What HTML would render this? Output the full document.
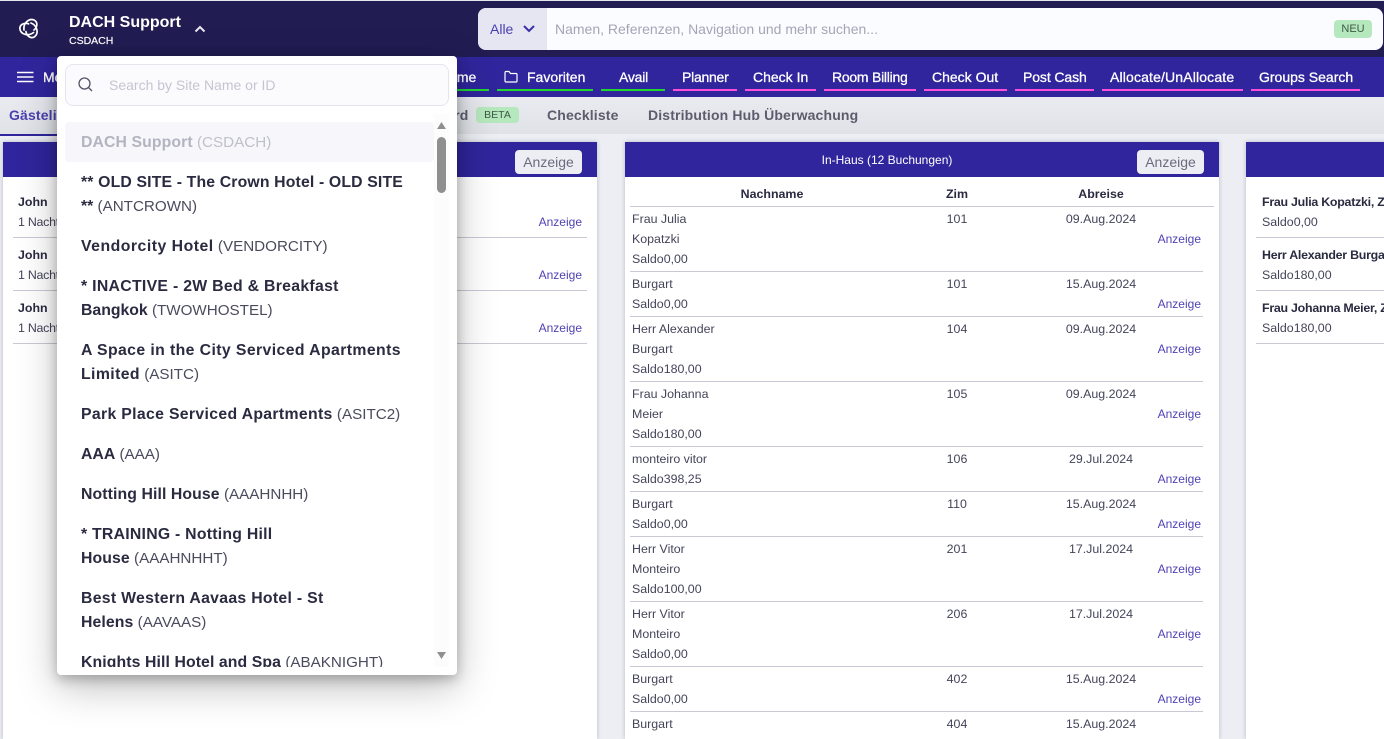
<!DOCTYPE html>
<html lang="de"><head><meta charset="utf-8"><title>DACH Support</title>
<style>
*{box-sizing:border-box}
html,body{margin:0;padding:0;width:1384px;height:739px;overflow:hidden}
body{background:#eceef4;font-family:"Liberation Sans",sans-serif;color:#33334a}
#w{position:relative;width:1384px;height:739px;overflow:hidden;background:#eceef4}
.a{position:absolute}
.t{position:absolute;white-space:nowrap;line-height:20px;height:20px;font-size:12.4px;color:#44445a;margin-top:1px}
.z{margin-top:0}
.c{transform:translateX(-50%)}
.r{transform:translateX(-100%)}
.b{font-weight:bold;color:#2a2a40}
.l{color:#4f42b5;font-size:12px}
.ln{position:absolute;height:1px;background:#c9c9d6}
.n{position:absolute;top:67px;height:20px;line-height:20px;font-size:14px;color:#fff;white-space:nowrap;-webkit-text-stroke:.3px #fff}
.u{position:absolute;top:89px;height:2px}
.g{background:#1fd62e}.p{background:#ff4fd8}
.panel{position:absolute;top:142px;height:597px;background:#fff;box-shadow:0 0 4px rgba(60,60,90,.3)}
.ph{position:absolute;left:0;right:0;top:0;height:35px;background:#30259c}
.btn{position:absolute;top:150px;width:67px;height:24px;border-radius:4px;background:#eceef4;color:#6b6b7d;font-size:14px;line-height:24px;text-align:center}
.i{position:absolute;left:24px;white-space:nowrap;line-height:24px;height:24px;font-size:15.2px;color:#2a2a40}
.i b{font-size:15.8px}
.i span{color:#4b4b5e}
.tab{position:absolute;top:105px;line-height:20px;font-size:14px;font-weight:bold;letter-spacing:.15px;color:#5c5c6c;white-space:nowrap}
.x{letter-spacing:-.25px}
</style></head><body><div id="w">

<div class="a" style="left:0;top:0;width:1384px;height:57px;background:#211d53"></div>
<div class="a" style="left:0;top:0;width:1384px;height:1px;background:#e6e6ee"></div>
<svg class="a" style="left:19px;top:18px" width="21" height="21" viewBox="0 0 21 21" fill="none" stroke="#fff" stroke-width="1.700" stroke-linecap="round">
<g id="k"><path d="M5 12C4 5 10 0 15 2C19 4 18.500 9 15 12"/></g>
<path transform="rotate(120 10.500 10.500)" d="M5 12C4 5 10 0 15 2C19 4 18.500 9 15 12"/>
<path transform="rotate(240 10.500 10.500)" d="M5 12C4 5 10 0 15 2C19 4 18.500 9 15 12"/>
</svg>
<div class="t" style="left:69px;top:12px;font-size:16px;font-weight:bold;color:#fff">DACH Support</div>
<div class="t z" style="left:69px;top:31px;font-size:10.5px;color:#fff;-webkit-text-stroke:.2px #fff">CSDACH</div>
<svg class="a" style="left:194px;top:24px" width="12" height="10" viewBox="0 0 12 10" fill="none" stroke="#e8e8f0" stroke-width="2"><path d="M1.500 7.500L6 3l4.500 4.500"/></svg>

<div class="a" style="left:478px;top:8px;width:905px;height:42px;background:#fbfcff;border-radius:8px"></div>
<div class="a" style="left:478px;top:8px;width:69px;height:42px;background:#e6e6f3;border-radius:8px 0 0 8px"></div>
<div class="t z" style="left:490px;top:19px;font-size:14px;color:#4a3fb0">Alle</div>
<svg class="a" style="left:522px;top:24px" width="14" height="10" viewBox="0 0 14 10" fill="none" stroke="#3a2fa5" stroke-width="2"><path d="M2 2l5 5 5-5"/></svg>
<div class="t z" style="left:555px;top:19px;font-size:14px;color:#a5a5b5">Namen, Referenzen, Navigation und mehr suchen...</div>
<div class="a" style="left:1334px;top:20px;width:38px;height:18px;background:#b6e8bd;border-radius:4px;color:#3d5a45;font-size:11px;line-height:18px;text-align:center">NEU</div>

<div class="a" style="left:0;top:57px;width:1384px;height:40px;background:#30259c"></div>
<svg class="a" style="left:17px;top:71px" width="17" height="12" viewBox="0 0 17 12" stroke="#fff" stroke-width="1.600"><path d="M0 1.500h16.500M0 6h16.500M0 10.500h16.500"/></svg>
<div class="n" style="left:43px">Menü</div>
<div class="n" style="left:439px">Home</div>
<div class="u g" style="left:440px;width:49px"></div>
<svg class="a" style="left:504px;top:70px" width="14" height="13" viewBox="0 0 14 13" fill="none" stroke="#fff" stroke-width="1.200"><path d="M1 2.500a1 1 0 0 1 1-1h3l1.500 2H12a1 1 0 0 1 1 1V11a1 1 0 0 1-1 1H2a1 1 0 0 1-1-1z"/></svg>
<div class="n" style="left:527px">Favoriten</div>
<div class="u g" style="left:497px;width:96px"></div>
<div class="n" style="left:619px;letter-spacing:-.2px">Avail</div>
<div class="u g" style="left:601px;width:64px"></div>
<div class="n" style="left:682px;letter-spacing:-.25px">Planner</div>
<div class="u p" style="left:673px;width:64px"></div>
<div class="n" style="left:753px">Check In</div>
<div class="u p" style="left:745px;width:71px"></div>
<div class="n" style="left:832px;letter-spacing:-.25px">Room Billing</div>
<div class="u p" style="left:824px;width:92px"></div>
<div class="n" style="left:932px">Check Out</div>
<div class="u p" style="left:924px;width:83px"></div>
<div class="n" style="left:1023px;letter-spacing:-.1px">Post Cash</div>
<div class="u p" style="left:1015px;width:79px"></div>
<div class="n" style="left:1110px;letter-spacing:.15px">Allocate/UnAllocate</div>
<div class="u p" style="left:1102px;width:141px"></div>
<div class="n" style="left:1259px">Groups Search</div>
<div class="u p" style="left:1251px;width:109px"></div>

<div class="a" style="left:0;top:97px;width:1384px;height:37px;background:linear-gradient(#e9ebf1,#dfe2e6)"></div>
<div class="a" style="left:0;top:134px;width:100px;height:2px;background:#30259c"></div>
<div class="tab" style="left:9px;color:#4a3fb0">Gästeliste</div>
<div class="tab" style="left:394px">Dashboard</div>
<div class="a" style="left:476px;top:107px;width:43px;height:16px;background:#b6e8bd;border-radius:4px;color:#3d5a45;font-size:10.5px;line-height:16px;text-align:center">BETA</div>
<div class="tab" style="left:547px">Checkliste</div>
<div class="tab" style="left:648px">Distribution Hub Überwachung</div>

<div class="panel" style="left:3px;width:594px"><div class="ph"></div></div>
<div class="btn" style="left:515px">Anzeige</div>
<div class="t b" style="left:18px;top:191px">John</div><div class="t x" style="left:18px;top:211px">1 Nacht</div><div class="t l r" style="left:582px;top:211px">Anzeige</div><div class="ln" style="left:13px;top:237px;width:574px"></div>
<div class="t b" style="left:18px;top:244px">John</div><div class="t x" style="left:18px;top:264px">1 Nacht</div><div class="t l r" style="left:582px;top:264px">Anzeige</div><div class="ln" style="left:13px;top:290px;width:574px"></div>
<div class="t b" style="left:18px;top:297px">John</div><div class="t x" style="left:18px;top:317px">1 Nacht</div><div class="t l r" style="left:582px;top:317px">Anzeige</div><div class="ln" style="left:13px;top:343px;width:574px"></div>

<div class="panel" style="left:625px;width:594px"><div class="ph"></div></div>
<div class="t c z" style="left:887px;top:150px;color:#fff;font-size:12px">In-Haus (12 Buchungen)</div>
<div class="btn" style="left:1137px">Anzeige</div>
<div class="t b c" style="left:772px;top:183px">Nachname</div><div class="t b c" style="left:957px;top:183px">Zim</div><div class="t b c" style="left:1101px;top:183px">Abreise</div>
<div class="ln" style="left:630px;top:206px;width:584px"></div>

<div class="t" style="left:632px;top:208px">Frau Julia</div><div class="t" style="left:632px;top:228px">Kopatzki</div><div class="t" style="left:632px;top:248px">Saldo0,00</div><div class="t c" style="left:957px;top:208px">101</div><div class="t c" style="left:1101px;top:208px">09.Aug.2024</div><div class="t l r" style="left:1201px;top:228px">Anzeige</div><div class="ln" style="left:630px;top:271px;width:573px"></div>
<div class="t" style="left:632px;top:273px">Burgart</div><div class="t" style="left:632px;top:293px">Saldo0,00</div><div class="t c" style="left:957px;top:273px">101</div><div class="t c" style="left:1101px;top:273px">15.Aug.2024</div><div class="t l r" style="left:1201px;top:293px">Anzeige</div><div class="ln" style="left:630px;top:316px;width:573px"></div>
<div class="t" style="left:632px;top:318px">Herr Alexander</div><div class="t" style="left:632px;top:338px">Burgart</div><div class="t" style="left:632px;top:358px">Saldo180,00</div><div class="t c" style="left:957px;top:318px">104</div><div class="t c" style="left:1101px;top:318px">09.Aug.2024</div><div class="t l r" style="left:1201px;top:338px">Anzeige</div><div class="ln" style="left:630px;top:381px;width:573px"></div>
<div class="t" style="left:632px;top:383px">Frau Johanna</div><div class="t" style="left:632px;top:403px">Meier</div><div class="t" style="left:632px;top:423px">Saldo180,00</div><div class="t c" style="left:957px;top:383px">105</div><div class="t c" style="left:1101px;top:383px">09.Aug.2024</div><div class="t l r" style="left:1201px;top:403px">Anzeige</div><div class="ln" style="left:630px;top:446px;width:573px"></div>
<div class="t" style="left:632px;top:448px">monteiro vitor</div><div class="t" style="left:632px;top:468px">Saldo398,25</div><div class="t c" style="left:957px;top:448px">106</div><div class="t c" style="left:1101px;top:448px">29.Jul.2024</div><div class="t l r" style="left:1201px;top:468px">Anzeige</div><div class="ln" style="left:630px;top:491px;width:573px"></div>
<div class="t" style="left:632px;top:493px">Burgart</div><div class="t" style="left:632px;top:513px">Saldo0,00</div><div class="t c" style="left:957px;top:493px">110</div><div class="t c" style="left:1101px;top:493px">15.Aug.2024</div><div class="t l r" style="left:1201px;top:513px">Anzeige</div><div class="ln" style="left:630px;top:536px;width:573px"></div>
<div class="t" style="left:632px;top:538px">Herr Vitor</div><div class="t" style="left:632px;top:558px">Monteiro</div><div class="t" style="left:632px;top:578px">Saldo100,00</div><div class="t c" style="left:957px;top:538px">201</div><div class="t c" style="left:1101px;top:538px">17.Jul.2024</div><div class="t l r" style="left:1201px;top:558px">Anzeige</div><div class="ln" style="left:630px;top:601px;width:573px"></div>
<div class="t" style="left:632px;top:603px">Herr Vitor</div><div class="t" style="left:632px;top:623px">Monteiro</div><div class="t" style="left:632px;top:643px">Saldo0,00</div><div class="t c" style="left:957px;top:603px">206</div><div class="t c" style="left:1101px;top:603px">17.Jul.2024</div><div class="t l r" style="left:1201px;top:623px">Anzeige</div><div class="ln" style="left:630px;top:666px;width:573px"></div>
<div class="t" style="left:632px;top:668px">Burgart</div><div class="t" style="left:632px;top:688px">Saldo0,00</div><div class="t c" style="left:957px;top:668px">402</div><div class="t c" style="left:1101px;top:668px">15.Aug.2024</div><div class="t l r" style="left:1201px;top:688px">Anzeige</div><div class="ln" style="left:630px;top:711px;width:573px"></div>
<div class="t" style="left:632px;top:713px">Burgart</div><div class="t c" style="left:957px;top:713px">404</div><div class="t c" style="left:1101px;top:713px">15.Aug.2024</div>
<div class="a" style="left:625px;top:730px;width:594px;height:9px;overflow:hidden"><div class="t" style="left:7px;top:3px">Saldo0,00</div><div class="t l r" style="left:576px;top:3px">Anzeige</div></div>

<div class="a" style="left:1240px;top:136px;width:144px;height:603px;overflow:hidden">
<div class="panel" style="left:6px;top:6px;width:160px"><div class="ph"></div></div>
<div class="t b x" style="left:22px;top:55px">Frau Julia Kopatzki, Zimmer 101</div><div class="t" style="left:22px;top:75px">Saldo0,00</div><div class="ln" style="left:16px;top:101px;width:128px"></div>
<div class="t b x" style="left:22px;top:108px">Herr Alexander Burgart, Zimmer 104</div><div class="t" style="left:22px;top:128px">Saldo180,00</div><div class="ln" style="left:16px;top:154px;width:128px"></div>
<div class="t b x" style="left:22px;top:161px">Frau Johanna Meier, Zimmer 105</div><div class="t" style="left:22px;top:181px">Saldo180,00</div><div class="ln" style="left:16px;top:207px;width:128px"></div>
</div>

<div class="a" style="left:57px;top:56px;width:400px;height:619px;background:#fff;border-radius:4px;box-shadow:0 4px 12px rgba(0,0,0,.25),0 12px 40px rgba(0,0,0,.25);overflow:hidden">
<div class="a" style="left:8px;top:8px;width:384px;height:42px;background:#fbfbfd;border:1px solid #e5e5ee;border-radius:8px"></div>
<svg class="a" style="left:20px;top:20px" width="17" height="17" viewBox="0 0 17 17" fill="none" stroke="#55556a" stroke-width="1.300"><circle cx="7.500" cy="7.500" r="5.500"/><path d="M11.500 11.500L15 15"/></svg>
<div class="t z" style="left:52px;top:19px;font-size:14px;color:#c5c5d2">Search by Site Name or ID</div>
<div class="a" style="left:8px;top:66px;width:369px;height:40px;background:#f6f6fb;border-radius:4px"></div>
<div class="a" style="left:0;top:0;width:400px;height:611px;overflow:hidden">
<div class="i" style="top:75px;color:#b4b4c0"><b style="letter-spacing:.1px">DACH Support</b> <span style="color:#c0c0cb">(CSDACH)</span></div>
<div class="i" style="top:115px"><b style="letter-spacing:.15px">** OLD SITE - The Crown Hotel - OLD SITE</b></div>
<div class="i" style="top:139px"><b>**</b> <span>(ANTCROWN)</span></div>
<div class="i" style="top:179px"><b style="letter-spacing:.5px">Vendorcity Hotel</b> <span>(VENDORCITY)</span></div>
<div class="i" style="top:219px"><b style="letter-spacing:.3px">* INACTIVE - 2W Bed &amp; Breakfast</b></div>
<div class="i" style="top:243px"><b>Bangkok</b> <span>(TWOWHOSTEL)</span></div>
<div class="i" style="top:283px"><b style="letter-spacing:.4px">A Space in the City Serviced Apartments</b></div>
<div class="i" style="top:307px"><b style="letter-spacing:.4px">Limited</b> <span>(ASITC)</span></div>
<div class="i" style="top:347px"><b style="letter-spacing:.33px">Park Place Serviced Apartments</b> <span>(ASITC2)</span></div>
<div class="i" style="top:387px"><b>AAA</b> <span>(AAA)</span></div>
<div class="i" style="top:427px"><b style="letter-spacing:.1px">Notting Hill House</b> <span>(AAAHNHH)</span></div>
<div class="i" style="top:467px"><b style="letter-spacing:.25px">* TRAINING - Notting Hill</b></div>
<div class="i" style="top:491px"><b style="letter-spacing:.1px">House</b> <span>(AAAHNHHT)</span></div>
<div class="i" style="top:531px"><b style="letter-spacing:.3px">Best Western Aavaas Hotel - St</b></div>
<div class="i" style="top:555px"><b style="letter-spacing:.1px">Helens</b> <span>(AAVAAS)</span></div>
<div class="i" style="top:595px"><b style="letter-spacing:.1px">Knights Hill Hotel and Spa</b> <span>(ABAKNIGHT)</span></div>
</div>
<div class="a" style="left:377px;top:58px;width:15px;height:553px;background:#fcfcfc"></div>
<div class="a" style="left:380px;top:81px;width:9px;height:56px;background:#8f8f8f;border-radius:5px"></div>
<svg class="a" style="left:380px;top:66px" width="9" height="7" viewBox="0 0 9 7"><path d="M4.500 0L9 7H0z" fill="#8f8f8f"/></svg>
<svg class="a" style="left:380px;top:596px" width="9" height="7" viewBox="0 0 9 7"><path d="M0 0h9L4.500 7z" fill="#8f8f8f"/></svg>
</div>
</div></body></html>
